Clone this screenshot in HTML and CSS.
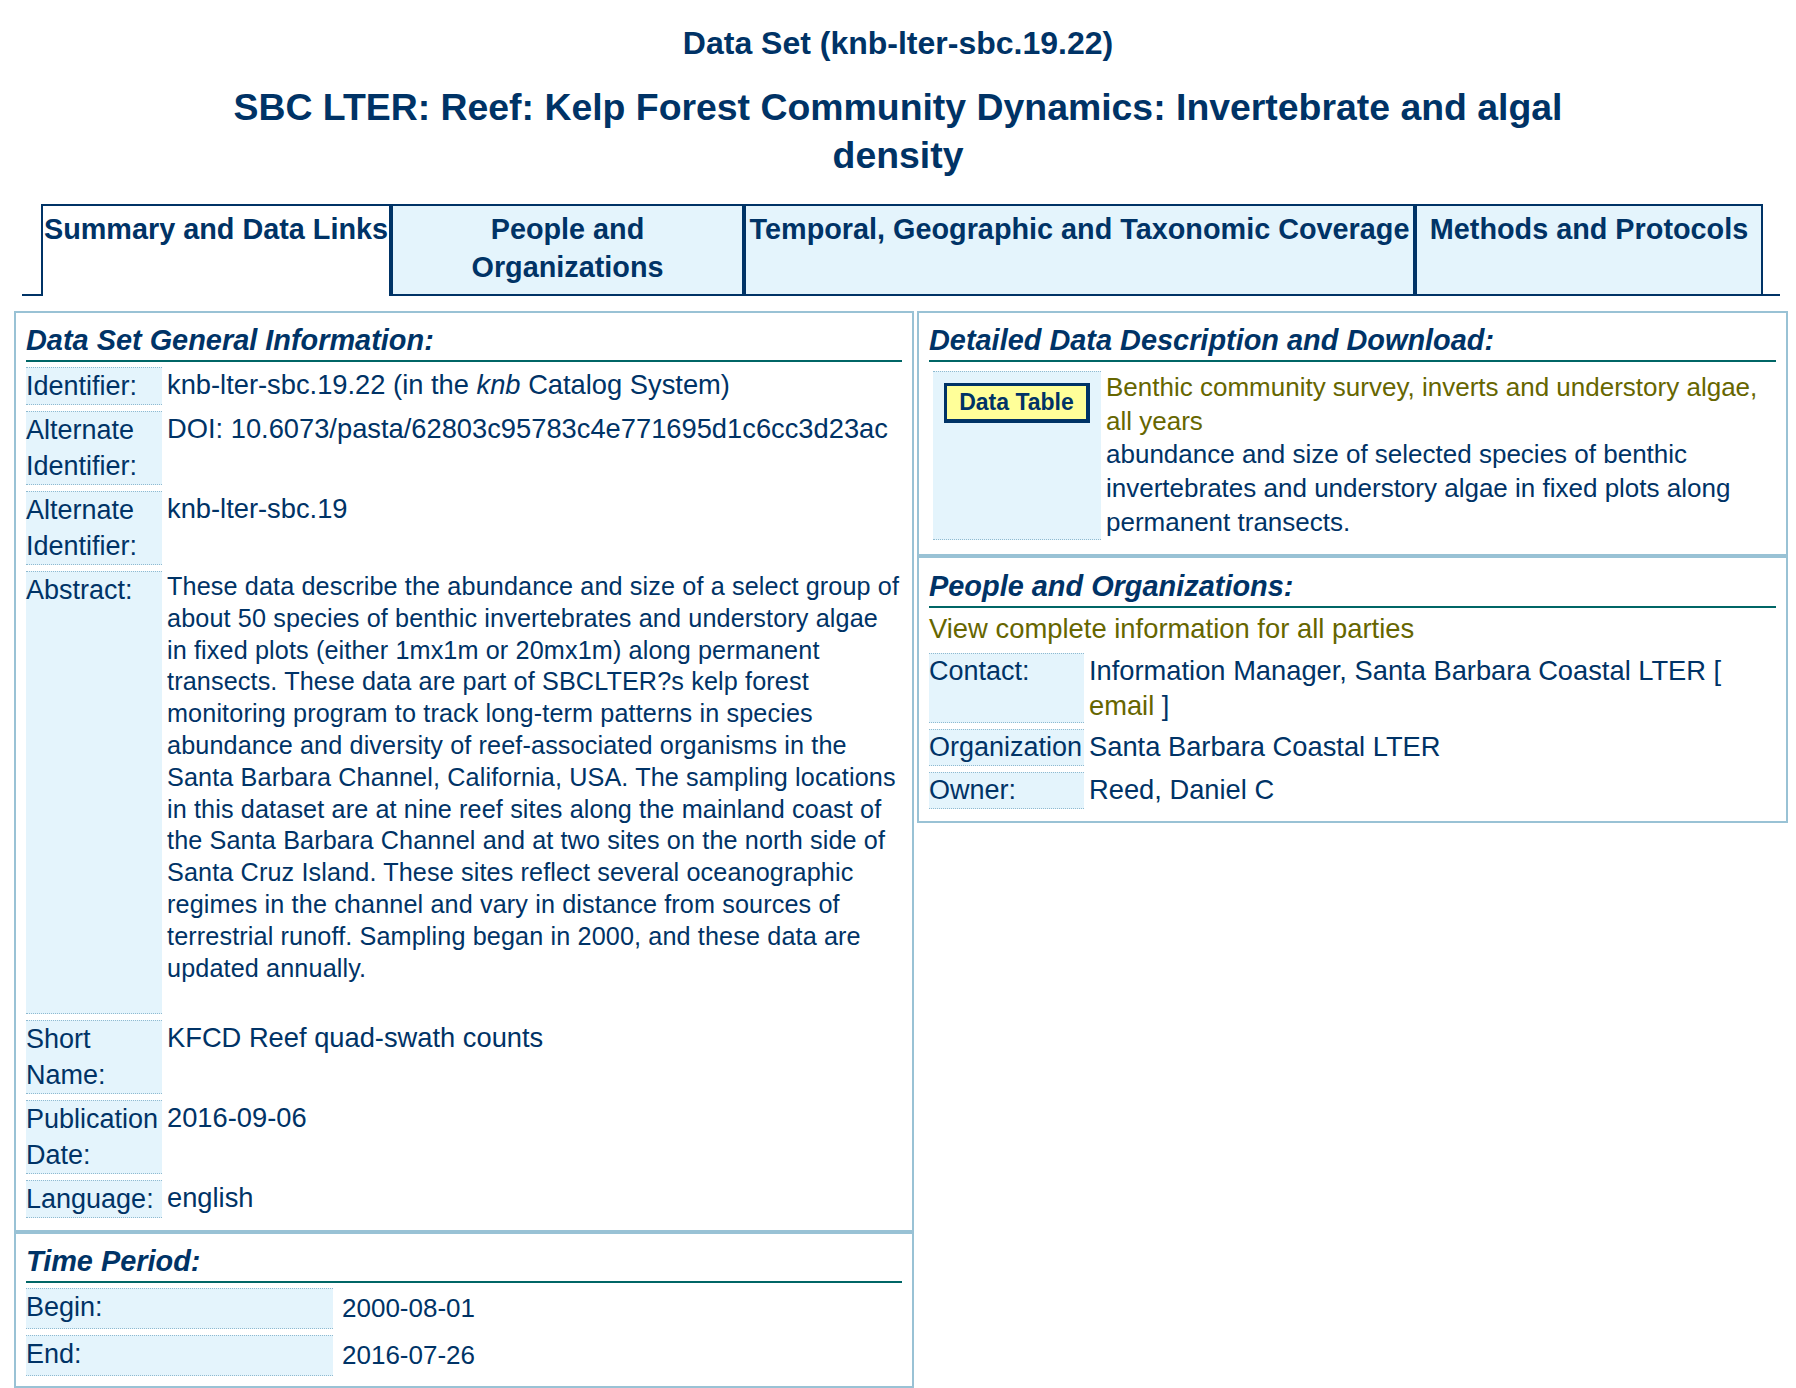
FILE: index.html
```html
<!DOCTYPE html>
<html lang="en">
<head>
<meta charset="utf-8">
<title>Data Set (knb-lter-sbc.19.22)</title>
<link rel="stylesheet" href="styles.css">
</head>
<body>
<div class="page">
  <h2 class="ds-id">Data Set (knb-lter-sbc.19.22)</h2>
  <h1 class="ds-title">SBC LTER: Reef: Kelp Forest Community Dynamics: Invertebrate and algal density</h1>

  <nav class="tabs">
    <div class="tab tab-active tab-w1">Summary and Data Links</div>
    <div class="tab tab-w2">People and Organizations</div>
    <div class="tab tab-w3">Temporal, Geographic and Taxonomic Coverage</div>
    <div class="tab tab-w4">Methods and Protocols</div>
  </nav>

  <div class="columns">
    <div class="col">
      <section class="box box-general">
        <h3 class="box-title">Data Set General Information:</h3>
        <div class="rows">
          <div class="row">
            <div class="label">Identifier:</div>
            <div class="value">knb-lter-sbc.19.22 (in the <em>knb</em> Catalog System)</div>
          </div>
          <div class="row">
            <div class="label">Alternate Identifier:</div>
            <div class="value">DOI: 10.6073/pasta/62803c95783c4e771695d1c6cc3d23ac</div>
          </div>
          <div class="row">
            <div class="label">Alternate Identifier:</div>
            <div class="value">knb-lter-sbc.19</div>
          </div>
          <div class="row">
            <div class="label">Abstract:</div>
            <div class="value value-abstract">These data describe the abundance and size of a select group of about 50 species of benthic invertebrates and understory algae in fixed plots (either 1mx1m or 20mx1m) along permanent transects. These data are part of SBCLTER?s kelp forest monitoring program to track long-term patterns in species abundance and diversity of reef-associated organisms in the Santa Barbara Channel, California, USA. The sampling locations in this dataset are at nine reef sites along the mainland coast of the Santa Barbara Channel and at two sites on the north side of Santa Cruz Island. These sites reflect several oceanographic regimes in the channel and vary in distance from sources of terrestrial runoff. Sampling began in 2000, and these data are updated annually.</div>
          </div>
          <div class="row">
            <div class="label">Short Name:</div>
            <div class="value">KFCD Reef quad-swath counts</div>
          </div>
          <div class="row">
            <div class="label">Publication Date:</div>
            <div class="value">2016-09-06</div>
          </div>
          <div class="row">
            <div class="label">Language:</div>
            <div class="value">english</div>
          </div>
        </div>
      </section>

      <section class="box box-time">
        <h3 class="box-title">Time Period:</h3>
        <div class="rows">
          <div class="row row-time">
            <div class="label label-time">Begin:</div>
            <div class="value value-time">2000-08-01</div>
          </div>
          <div class="row row-time">
            <div class="label label-time">End:</div>
            <div class="value value-time">2016-07-26</div>
          </div>
        </div>
      </section>
    </div>

    <div class="col">
      <section class="box box-detail">
        <h3 class="box-title">Detailed Data Description and Download:</h3>
        <div class="row row-detail">
          <div class="label label-detail"><span class="btn">Data Table</span></div>
          <div class="value value-detail">
            <div class="link">Benthic community survey, inverts and understory algae, all years</div>
            <div>abundance and size of selected species of benthic invertebrates and understory algae in fixed plots along permanent transects.</div>
          </div>
        </div>
      </section>

      <section class="box box-people">
        <h3 class="box-title">People and Organizations:</h3>
        <div class="link view-all">View complete information for all parties</div>
        <div class="rows rows-people">
          <div class="row">
            <div class="label label-people">Contact:</div>
            <div class="value value-people">Information Manager, Santa Barbara Coastal LTER [ <span class="link">email</span> ]</div>
          </div>
          <div class="row">
            <div class="label label-people">Organization</div>
            <div class="value value-people">Santa Barbara Coastal LTER</div>
          </div>
          <div class="row">
            <div class="label label-people">Owner:</div>
            <div class="value value-people">Reed, Daniel C</div>
          </div>
        </div>
      </section>
    </div>
  </div>
</div>
</body>
</html>
```

FILE: styles.css
```css
* { box-sizing: border-box; }

html, body {
  margin: 0;
  padding: 0;
  background: #ffffff;
}

body {
  font-family: "Liberation Sans", Arial, Helvetica, sans-serif;
  color: #003366;
}

.page {
  padding-top: 24px;
  padding-bottom: 20px;
}

.ds-id {
  margin: 0;
  text-align: center;
  font-size: 32px;
  line-height: 38px;
  font-weight: bold;
}

.ds-title {
  margin: 21px auto 0;
  max-width: 1400px;
  text-align: center;
  font-size: 37.4px;
  line-height: 48px;
  font-weight: bold;
}

/* ---------- tabs ---------- */
.tabs {
  display: flex;
  margin: 25px 0 0 22px;
  width: 1758px;
  height: 92px;
  padding-left: 19px;
  border-bottom: 2px solid #003366;
}

.tab {
  flex: none;
  height: 90px;
  border: 2px solid #003366;
  border-bottom: 0;
  background: #e4f4fc;
  font-size: 28.8px;
  line-height: 38px;
  font-weight: bold;
  text-align: center;
  padding-top: 4px;
}

.tab-active {
  background: #ffffff;
  height: 92px;
  margin-bottom: -2px;
}

.tab-w1 { width: 350px; white-space: nowrap; }
.tab-w2 { width: 353px; }
.tab-w3 { width: 671px; white-space: nowrap; }
.tab-w4 { width: 348px; white-space: nowrap; }

/* ---------- columns ---------- */
.columns {
  display: grid;
  grid-template-columns: 900px 871px;
  column-gap: 3px;
  margin: 15px 0 0 14px;
  align-items: start;
}

.box {
  border: 2px solid #99c2d5;
  padding: 10px 10px 10px 10px;
}

.box-general { padding-bottom: 12px; }

.box-title {
  margin: 0;
  font-size: 28.9px;
  line-height: 34px;
  font-weight: bold;
  font-style: italic;
  padding-bottom: 3px;
  border-bottom: 2px solid #006666;
}

.rows {
  margin-top: 5px;
  display: flex;
  flex-direction: column;
  gap: 6px;
}

.row {
  display: flex;
  gap: 5px;
}

.label {
  flex: none;
  width: 136px;
  background: #e4f4fc;
  border-top: 1px dotted #8fbad0;
  border-bottom: 1px dotted #8fbad0;
  font-size: 27px;
  line-height: 36px;
}

.value {
  flex: 1;
  min-width: 0;
  font-size: 27.3px;
  line-height: 36px;
}

.value-abstract {
  font-size: 25.2px;
  line-height: 31.8px;
  letter-spacing: 0.13px;
  padding-right: 2px;
  padding-bottom: 30px;
}

.link { color: #666600; }

/* time period */
.row-time { gap: 9px; }
.label-time { width: 307px; }
.value-time {
  font-size: 26px;
  line-height: 36px;
  padding: 2px 0 3px;
}

/* detailed */
.box-detail { padding-bottom: 14px; }

.row-detail {
  margin: 9px 0 0 4px;
}

.label-detail {
  width: 168px;
  padding-top: 11px;
  text-align: center;
}

.btn {
  display: inline-block;
  background: #ffff99;
  border: 3px solid #003366;
  border-right-width: 4px;
  border-bottom-width: 4px;
  padding: 0 12px;
  font-size: 23px;
  line-height: 33px;
  font-weight: bold;
  color: #003366;
}

.value-detail {
  font-size: 26px;
  line-height: 33.7px;
}

/* people */
.box-people {
  padding-top: 11px;
  padding-bottom: 12px;
}

.view-all {
  margin-top: 3px;
  font-size: 27.4px;
  line-height: 36px;
}

.rows-people { margin-top: 6px; }

.label-people {
  width: 155px;
  line-height: 35px;
  white-space: nowrap;
}

.value-people { line-height: 35px; }
```
